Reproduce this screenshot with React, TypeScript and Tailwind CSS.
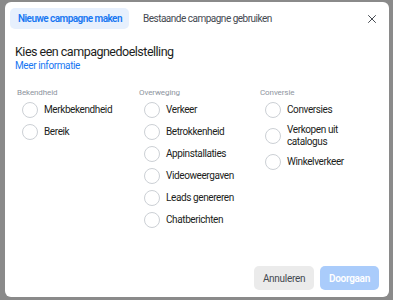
import { X } from 'lucide-react';

const columns = [
  { title: 'Bekendheid', items: ['Merkbekendheid', 'Bereik'], narrow: false },
  {
    title: 'Overweging',
    items: ['Verkeer', 'Betrokkenheid', 'Appinstallaties', 'Videoweergaven', 'Leads genereren', 'Chatberichten'],
    narrow: false,
  },
  { title: 'Conversie', items: ['Conversies', 'Verkopen uit catalogus', 'Winkelverkeer'], narrow: true },
];

function Radio({ label, narrow }: { label: string; narrow: boolean }) {
  return (
    <div className="flex items-center gap-[6px] min-h-[22px] py-[3px]">
      <span className="h-[16px] w-[16px] shrink-0 rounded-full border border-[#ccd0d5] bg-white" />
      <span
        className={`text-[10px] leading-[12px] tracking-[-0.4px] text-[#1c1e21] ${narrow ? 'max-w-[60px]' : 'whitespace-nowrap'}`}
      >
        {label}
      </span>
    </div>
  );
}

export default function App() {
  return (
    <div className="h-[300px] w-[393px] bg-[#8a8a8a] pl-[5px] pt-[2px] font-['Roboto',sans-serif]">
      <div className="h-[295px] w-[384px] rounded-[6px] bg-white flex flex-col">
        <div className="flex items-center pl-[5px] pr-[10px] pt-[6px]">
          <div className="rounded-[5px] bg-[#e7f0fd] pl-[8px] pr-[7px] h-[21px] flex items-center text-[10px] font-semibold tracking-[-0.55px] text-[#1877f2]">
            Nieuwe campagne maken
          </div>
          <div className="ml-[14px] text-[10px] tracking-[-0.5px] text-[#444950]">Bestaande campagne gebruiken</div>
          <X className="ml-auto h-[14px] w-[14px] text-[#444950]" strokeWidth={1.7} />
        </div>

        <div className="px-[10px] pt-[15px]">
          <h2 className="text-[12.5px] leading-[15px] tracking-[-0.5px] text-[#1c1e21]">Kies een campagnedoelstelling</h2>
          <a className="block text-[10px] leading-[13px] tracking-[-0.4px] text-[#1877f2]">Meer informatie</a>
        </div>

        <div className="grid grid-cols-[122px_121px_1fr] pl-[12px] pt-[16px]">
          {columns.map(col => (
            <div key={col.title}>
              <div className="text-[8px] leading-[10px] tracking-[-0.1px] text-[#8d949e] mb-[1px]">{col.title}</div>
              <div className="pl-[5px] flex flex-col">
                {col.items.map(item => (
                  <Radio key={item} label={item} narrow={col.narrow} />
                ))}
              </div>
            </div>
          ))}
        </div>

        <div className="mt-auto flex justify-end gap-[6px] pr-[10px] pb-[7px]">
          <button className="h-[24px] w-[60px] rounded-[5px] bg-[#ebebeb] text-[10px] tracking-[-0.3px] text-[#444950]">
            Annuleren
          </button>
          <button className="h-[24px] w-[59px] rounded-[5px] bg-[#aaccfb] text-[10px] font-semibold tracking-[-0.3px] text-white">
            Doorgaan
          </button>
        </div>
      </div>
    </div>
  );
}
